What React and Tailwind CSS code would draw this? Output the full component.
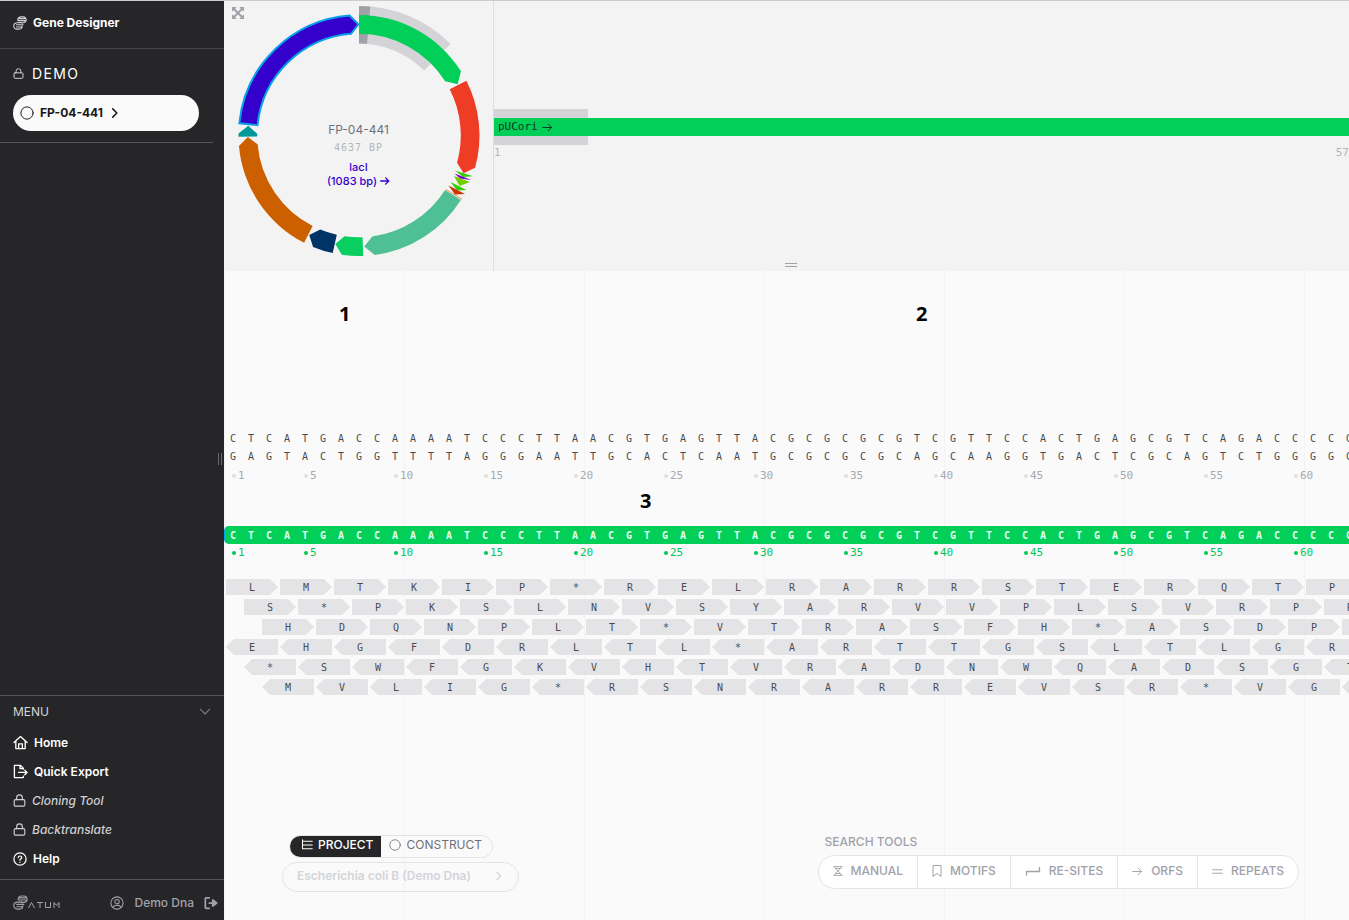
import React from "react";

const SANS = "font-['Inter','Liberation_Sans',sans-serif]";
const MONO = "font-['DejaVu_Sans_Mono','Liberation_Mono',monospace]";

const SEQUENCE = "CTCATGACCAAAATCCCTTAACGTGAGTTACGCGCGCGTCGTTCCACTGAGCGTCAGACCCCG";
const PAIR = { A: "T", T: "A", C: "G", G: "C" };
const COMPLEMENT = SEQUENCE.split("").map((b) => PAIR[b]).join("");

const FRAMES = [
  { residues: "LMTKIP*RELRARRSTERQTP", pad: "pl-[2px]", forward: true },
  { residues: "S*PKSLNVSYARVVPLSVRPR", pad: "pl-[20px]", forward: true },
  { residues: "HDQNPLT*VTRASFH*ASDPV", pad: "pl-[38px]", forward: true },
  { residues: "EHGFDRLTL*ARTTGSLTLGR", pad: "pl-[2px]", forward: false },
  { residues: "*SWFGKVHTVRADNWQADSGT", pad: "pl-[20px]", forward: false },
  { residues: "MVLIG*RSNRARREVSR*VGY", pad: "pl-[38px]", forward: false },
];

const CX = 135;
const CY = 134.5;

function point(radius, degrees) {
  const a = (degrees * Math.PI) / 180;
  return `${(CX + radius * Math.sin(a)).toFixed(2)} ${(CY - radius * Math.cos(a)).toFixed(2)}`;
}

function band(inner, outer, from, to, tip) {
  const mid = (inner + outer) / 2;
  const head = tip === undefined ? "" : `L${point(mid, tip)}`;
  return `M${point(outer, from)}A${outer} ${outer} 0 0 1 ${point(outer, to)}${head}L${point(inner, to)}A${inner} ${inner} 0 0 0 ${point(inner, from)}Z`;
}

// `from` and `to` bound the body in degrees, `tip` is where the arrow head ends.
const FEATURES = [
  { from: 0, to: 57.8, tip: 62.5, fill: "#02cf58" },
  { from: 63, to: 105.5, tip: 109.8, fill: "#ef3c25" },
  { from: 122.3, to: 172.5, tip: 177.3, fill: "#4fbf95" },
  { from: 178, to: 188.2, tip: 192.3, fill: "#09cf60" },
  { from: 192.6, to: 202.4, tip: 206.6, fill: "#003366" },
  { from: 207.1, to: 265, tip: 269.2, fill: "#cc5f00" },
  { from: 269.4, to: 271, tip: 275, fill: "#009999" },
];

function PlasmidMap() {
  return (
    <svg viewBox="0 0 270 269" className="block h-[269px] w-[270px]" aria-hidden="true">
      <path d={band(92, 129.5, 0, 45)} fill="#d4d4d8" />
      <path d={band(92, 129.5, 0, 5)} fill="#a0a0a8" />
      {FEATURES.map((f) => (
        <path key={f.from} d={band(101.8, 120.5, f.from, f.to, f.tip)} fill={f.fill} />
      ))}
      <path d={band(102, 120.3, 275.8, 355.5, 359.7)} fill="#3300cc" stroke="#0aa0e8" strokeWidth="2" />
      <path d="M231 169.500L249 175.200L239 176Z" fill="#33cc00" />
      <path d="M230.500 172.500L247.500 179L236 177.500Z" fill="#7f00cc" />
      <path d="M230 175L246 181L235.500 185Z" fill="#73cc00" />
      <path d="M226.500 181L242.500 189L233 189.500Z" fill="#33cc00" />
      <path d="M224.500 184.500L241 193L231 193.500Z" fill="#cc3300" />
      <path d="M222 188.500L238 198.300" stroke="#e8924a" strokeWidth="1" />
    </svg>
  );
}

function Icon({ className = "size-4", width = 1.4, box = 16, children }) {
  return (
    <svg viewBox={`0 0 ${box} ${box}`} className={`shrink-0 ${className}`} fill="none" stroke="currentColor" strokeWidth={width} strokeLinecap="round" strokeLinejoin="round" aria-hidden="true">
      {children}
    </svg>
  );
}

const Helix = ({ className }) => (
  <Icon className={className} width={1.2}>
    <path d="M5.5 4.5C5.5 2 7 1 9.5 1h2c5 0 4.500 6.800 0 6.800H8.500M6 3h7.500M5.500 5.300h8.500M10.500 8.200C10.500 6.800 8 7.600 5 7.600C-.500 7.600-.500 15 4.500 15h2.500c2.500 0 3.500-2 3.500-3.500M4 10h7.500M4 12.500h6.500M6 7.700h6" />
  </Icon>
);
const Lock = ({ className }) => (
  <Icon className={className} width={1.4}>
    <rect x="1.500" y="7" width="13" height="8" rx="1.500" />
    <path d="M4.500 7V4.500a3.500 3.500 0 0 1 7 0V7" />
  </Icon>
);
const Ring = ({ className }) => (
  <Icon className={className} width={1.1}>
    <circle cx="8" cy="8" r="7" />
  </Icon>
);
const Chevron = ({ className }) => (
  <Icon className={className} width={2}>
    <path d="M5 2.500L10.500 8L5 13.500" />
  </Icon>
);
const Arrow = ({ className, width = 1.4 }) => (
  <Icon className={className} width={width}>
    <path d="M1 8h13M9 3l5 5-5 5" />
  </Icon>
);

function MenuItem({ icon, label, locked }) {
  return (
    <li>
      <a href="#" className={`flex h-[29px] items-center gap-[6px] text-[12px] ${locked ? "font-medium text-[#cfcfd4] italic" : "font-semibold text-white"}`}>
        {icon}
        {label}
      </a>
    </li>
  );
}

function Sidebar() {
  return (
    <aside className="relative flex w-[224px] shrink-0 flex-col bg-[#262628] text-white">
      <header className="flex h-[48px] items-center gap-[6px] border-b border-[#44444a] pb-1 pl-[13px]">
        <Helix className="size-[14px] text-[#d4d4d8]" />
        <h1 className="text-[12px] font-bold">Gene Designer</h1>
      </header>
      <section className="mr-[11px] flex flex-col border-b border-[#55555c] pb-[11px] pl-[13px]">
        <h2 className="mt-3 flex h-[24px] items-center gap-2 text-[14px] tracking-widest">
          <Lock className="size-[11px] text-[#d4d4d8]" />
          DEMO
        </h2>
        <button type="button" className="mt-[10px] mr-[14px] flex h-[36px] items-center gap-[6px] rounded-full bg-[#fafafa] pl-[7px] text-[12px] font-bold text-[#18181b]">
          <Ring className="size-[14px]" />
          FP-04-441
          <Chevron className="size-3" />
        </button>
      </section>

      <nav className="mt-auto border-t border-[#55555a] px-[13px] pb-[6px]" aria-label="Menu">
        <h2 className="flex h-[32px] items-center justify-between text-[12px] text-[#d4d4d8]">
          MENU
          <Icon className="size-3 text-[#8a8a92]">
            <path d="M1.500 4L8 10.500L14.500 4" />
          </Icon>
        </h2>
        <ul>
          <MenuItem
            label="Home"
            icon={
              <Icon className="size-[15px]">
                <path d="M1 8L8 1.500L15 8M3 6.500V14.500H13V6.500M6 14.500V9.500h4v5" />
              </Icon>
            }
          />
          <MenuItem
            label="Quick Export"
            icon={
              <Icon className="size-[15px]">
                <path d="M11 5.500V4.500L8 1.500H1.500V14.500H11V13M7.500 1.500V5H11M6 9h9M12.500 6.500L15 9L12.500 11.500" />
              </Icon>
            }
          />
          <MenuItem locked label="Cloning Tool" icon={<Lock className="size-[13px]" />} />
          <MenuItem locked label="Backtranslate" icon={<Lock className="size-[13px]" />} />
          <MenuItem
            label="Help"
            icon={
              <Icon className="size-[14px]">
                <circle cx="8" cy="8" r="7" />
                <path d="M6 6.300C6 4 10 4 10 6.300C10 7.800 8 7.800 8 9.300M8 11.600v.2" />
              </Icon>
            }
          />
        </ul>
      </nav>
      <footer className="flex h-[41px] items-center border-t border-[#55555a] pt-[5px] pr-[6px] pl-[13px] text-[#a1a1aa]">
        <Helix className="size-[15px]" />
        <svg viewBox="0 0 32 8" className="mt-1 h-2 w-8" fill="none" stroke="currentColor" strokeWidth="1" role="img" aria-label="Atum">
          <path d="M.500 7L3.500 1.500L6.500 7M9 1.500h6M12 1.500V7M17.500 1V6.500h5V1M26 7V1.500l2.500 3l2.500-3V7" />
        </svg>
        <button type="button" className="ml-auto flex items-center gap-[10px] text-[12px] font-medium">
          <Icon className="size-[14px]" width={1.2}>
            <circle cx="8" cy="8" r="7" />
            <circle cx="8" cy="6.500" r="2.500" />
            <path d="M3.500 13C4.500 9.800 11.500 9.800 12.500 13" />
          </Icon>
          Demo Dna
        </button>
        <button type="button" className="ml-[10px]" aria-label="Sign out">
          <Icon className="size-[14px]" width={2}>
            <path d="M6 2H2.500Q1.500 2 1.500 3V13Q1.500 14 2.500 14H6" />
            <path d="M6 8h4M10 4.500V11.500L14.500 8Z" fill="currentColor" />
          </Icon>
        </button>
      </footer>
      <div className="absolute top-[452px] right-[2px] h-3 w-[4px] border-x border-[#66666e]" />
    </aside>
  );
}

function Overview() {
  return (
    <section className="flex h-[270px] bg-[#f3f3f3]">
      <div className="relative w-[270px] shrink-0 border-r border-[#dedee0]">
        <PlasmidMap />
        <button type="button" aria-label="Expand map" className="absolute top-[6px] left-[8px] text-[#a1a1aa]">
          <svg viewBox="0 0 12 12" className="size-3" fill="currentColor" aria-hidden="true">
            <path d="M0 0H4.500L3.200 1.800L6 4.600L8.800 1.800L7.500 0H12V4.500L10.200 3.200L7.400 6L10.200 8.800L12 7.500V12H7.500L8.800 10.200L6 7.400L3.200 10.200L4.500 12H0V7.500L1.800 8.800L4.600 6L1.800 3.200L0 4.500Z" />
          </svg>
        </button>
        <div className="absolute inset-x-0 top-[120px] flex flex-col items-center text-[#71717a]">
          <p className="h-[17px] text-[12px] leading-[17px]">FP-04-441</p>
          <p className={`${MONO} h-[19px] text-[10px] leading-[19px] tracking-widest text-[#b4b4ba]`}>4637 BP</p>
          <p className="mt-[3px] text-[11px] leading-[14px] font-medium text-[#3300cc]">lacI</p>
          <p className="flex items-center gap-[3px] text-[11px] leading-[14px] font-medium text-[#3300cc]">
            (1083 bp)
            <Arrow className="size-[10px]" width={2.2} />
          </p>
        </div>
      </div>
      <div className="relative min-w-0 flex-1 overflow-hidden pt-[108px]">
        <div className="h-[9px] w-[94px] bg-[#d4d4d8]" />
        <div className={`${MONO} flex h-[18px] items-center gap-1 bg-[#02cf58] pl-1 text-[11px] text-[#0c3a1e]`}>
          pUCori
          <Arrow className="size-[11px]" />
        </div>
        <div className="h-[9px] w-[94px] bg-[#d4d4d8]" />
        <div className={`${MONO} flex h-[16px] items-center justify-between text-[11px] text-[#b4b4ba]`}>
          <span>1</span>
          <span>57</span>
        </div>
        <div className="absolute bottom-[4px] left-[291px] h-[4px] w-3 border-y border-[#a1a1aa]" />
      </div>
    </section>
  );
}

function Bases({ text }) {
  return (
    <div className="flex h-[18px] items-center overflow-hidden">
      {text.split("").map((b, i) => (
        <span key={i} className="w-[18px] shrink-0 text-center">
          {b}
        </span>
      ))}
    </div>
  );
}

function Ruler({ dot }) {
  return (
    <div className="flex h-[18px] items-center overflow-hidden text-[11px]">
      {SEQUENCE.split("").map((_, i) => (
        <span key={i} className="flex w-[18px] shrink-0 items-center gap-[2px] pl-[8px]">
          {(i === 0 || (i + 1) % 5 === 0) && (
            <>
              <i className={`size-[4px] shrink-0 rounded-full ${dot}`} />
              <span>{i + 1}</span>
            </>
          )}
        </span>
      ))}
    </div>
  );
}

function Translation() {
  return (
    <div className={`${MONO} mt-4 flex flex-col gap-1 text-[10px] text-[#4a4a4f]`}>
      {FRAMES.map((f) => (
        <div key={f.residues} className={`flex gap-[2px] overflow-hidden ${f.pad}`}>
          {f.residues.split("").map((r, i) => (
            <span
              key={i}
              className={`flex h-4 w-[52px] shrink-0 items-center justify-center bg-[#e4e4e6] ${
                f.forward
                  ? "[clip-path:polygon(0_0,44px_0,100%_50%,44px_100%,0_100%)]"
                  : "[clip-path:polygon(8px_0,100%_0,100%_100%,8px_100%,0_50%)]"
              }`}
            >
              {r}
            </span>
          ))}
        </div>
      ))}
    </div>
  );
}

const TOOLS = [
  {
    label: "Manual",
    icon: (
      <Icon className="size-[10px]">
        <path d="M1 1h14M1 15h14M3 1.500C3 6 13 10 13 14.500M13 1.500C13 6 3 10 3 14.500M4 4h8M4 12h8" />
      </Icon>
    ),
  },
  {
    label: "Motifs",
    icon: (
      <svg viewBox="0 0 10 12" className="h-3 w-[10px] shrink-0" fill="none" stroke="currentColor" strokeWidth="1" strokeLinejoin="round" aria-hidden="true">
        <path d="M1 .500h8v11L5 8.500L1 11.500Z" />
      </svg>
    ),
  },
  {
    label: "Re-sites",
    icon: (
      <svg viewBox="0 0 16 10" className="h-[10px] w-4" fill="none" stroke="currentColor" strokeWidth="1.3" aria-hidden="true">
        <path d="M1.500 9.500V5.500H14.500V1" />
      </svg>
    ),
  },
  { label: "ORFs", icon: <Arrow className="size-[11px]" /> },
  {
    label: "Repeats",
    icon: (
      <Icon className="size-[11px]">
        <path d="M1 5.500h14M1 10.500h14" />
      </Icon>
    ),
  },
];

function Toolbars() {
  return (
    <div className="mt-auto flex items-end justify-between pr-[50px] pb-7 pl-[58px]">
      <div className="flex flex-col items-start gap-1">
        <div className="ml-[7px] flex h-[23px] overflow-hidden rounded-full border border-[#e4e4e7] text-[12px]">
          <button type="button" className="-my-px -ml-px flex items-center gap-[5px] bg-[#262628] pr-2 pb-[3px] pl-3 font-medium text-white">
            <Icon className="size-3">
              <path d="M2 1V13H6M2 3H6M2 8H6M7 3h8M7 8h8M7 13h8" />
            </Icon>
            PROJECT
          </button>
          <button type="button" className="flex items-center gap-[5px] pr-[10px] pb-[3px] pl-2 text-[#71717a]">
            <Ring className="size-3" />
            CONSTRUCT
          </button>
        </div>
        <button type="button" className="flex h-[30px] w-[237px] items-center justify-between rounded-full border border-[#e4e4e7] pr-[14px] pb-[3px] pl-[14px] text-[12px] font-semibold text-[#d4d4d8]">
          Escherichia coli B (Demo Dna)
          <Chevron className="size-[10px]" />
        </button>
      </div>
      <div className="mb-[3px] text-[12px] font-medium text-[#a1a1aa]">
        <h2 className="mb-1 ml-[7px] leading-[18px]">SEARCH TOOLS</h2>
        <div className="flex h-[34px] divide-x divide-[#e4e4e7] overflow-hidden rounded-full border border-[#e4e4e7] bg-white">
          {TOOLS.map((t) => (
            <button key={t.label} type="button" className="flex items-center gap-2 px-[14px] pb-[2px] uppercase">
              {t.icon}
              {t.label}
            </button>
          ))}
        </div>
      </div>
    </div>
  );
}

function Editor() {
  return (
    <section className="relative flex flex-1 flex-col bg-[#fafafa] bg-[linear-gradient(to_right,#f3f3f4_1px,transparent_1px)] bg-[size:180px_100%] pt-[158px]">
      <div className={`${MONO} text-[10px] text-[#4a4a4f]`}>
        <Bases text={SEQUENCE} />
        <Bases text={COMPLEMENT} />
        <div className="mt-[2px] text-[#a8a8af]">
          <Ruler dot="bg-[#e0e0e3]" />
        </div>
      </div>
      <div className={`${MONO} mt-[41px] text-[10px]`}>
        <div className="rounded-l-[5px] border-l border-[#0aa0e8] bg-[#02cf58] font-bold text-[#e8fff0]">
          <div className="-ml-px">
            <Bases text={SEQUENCE} />
          </div>
        </div>
        <div className="text-[#02c957]">
          <Ruler dot="bg-[#02c957]" />
        </div>
      </div>
      <div className="mt-px">
        <Translation />
      </div>
      <Toolbars />
      <div className="font-['Open_Sans',sans-serif] text-[20px] leading-6 font-bold text-black">
        <span className="absolute top-[31px] left-[115px]">1</span>
        <span className="absolute top-[31px] left-[692px]">2</span>
        <span className="absolute top-[218px] left-[416px]">3</span>
      </div>
    </section>
  );
}

export default function App() {
  return (
    <div className={`${SANS} flex min-h-screen border-t border-[#c9cccc]`}>
      <Sidebar />
      <main className="flex min-w-0 flex-1 flex-col overflow-hidden">
        <Overview />
        <Editor />
      </main>
    </div>
  );
}
